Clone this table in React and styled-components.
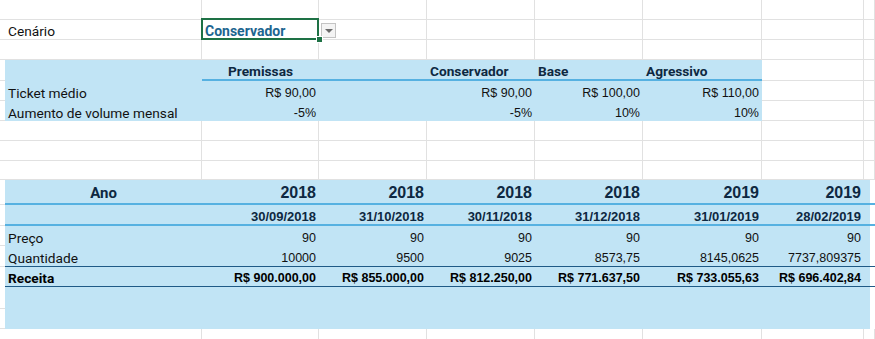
import React from "react";
import styled, { createGlobalStyle, css } from "styled-components";

const GlobalStyle = createGlobalStyle`
  body {
    margin: 0;
    background: #ffffff;
    overflow: hidden;
  }
`;

const COLS = "5px 197px 117px 108px 108px 108px 119px 102px 11px";
const GRID = "#e1e1e1";
const FILL = "#c1e4f5";
const ACCENT = "#56b1e1";
const DARK = "#1f5a86";
const NAVY = "#0e2841";

const fonts = {
  label: css`
    font-family: Roboto, "Liberation Sans", sans-serif;
    font-size: 13.7px;
    color: #111111;
  `,
  labelBold: css`
    font-family: Roboto, "Liberation Sans", sans-serif;
    font-size: 13.7px;
    font-weight: 700;
    color: #000000;
  `,
  head: css`
    font-family: Roboto, "Liberation Sans", sans-serif;
    font-size: 13.7px;
    font-weight: 700;
    color: ${NAVY};
  `,
  ano: css`
    font-family: Roboto, "Liberation Sans", sans-serif;
    font-size: 15px;
    font-weight: 700;
    color: ${NAVY};
  `,
  num: css`
    font-family: "Liberation Sans", Arial, sans-serif;
    font-size: 12.5px;
    color: #111111;
  `,
  year: css`
    font-family: "Liberation Sans", Arial, sans-serif;
    font-size: 16px;
    font-weight: 700;
    color: ${NAVY};
  `,
  date: css`
    font-family: "Liberation Sans", Arial, sans-serif;
    font-size: 13px;
    font-weight: 700;
    color: ${NAVY};
  `,
  total: css`
    font-family: "Liberation Sans", Arial, sans-serif;
    font-size: 12.5px;
    font-weight: 700;
    color: #000000;
  `,
  select: css`
    font-family: Roboto, "Liberation Sans", sans-serif;
    font-size: 14px;
    font-weight: 700;
    color: #1d6590;
  `,
};

const lines = {
  accent: `2px solid ${ACCENT}`,
  dark: `1px solid ${DARK}`,
  double: `4px double ${DARK}`,
};

const Sheet = styled.div`
  display: flex;
  flex-direction: column;
  width: 875px;
  height: 339px;
  overflow: hidden;
`;

const Row = styled.div`
  display: grid;
  grid-template-columns: ${COLS};
  height: ${({ $h }) => $h}px;
  flex-shrink: 0;
`;

/* excel sits text near the bottom of the cell */
const Cell = styled.div`
  position: relative;
  box-sizing: border-box;
  display: flex;
  align-items: center;
  justify-content: ${({ $align }) =>
    $align === "right" ? "flex-end" : $align === "center" ? "center" : "flex-start"};
  padding: 3px 3px 0;
  white-space: nowrap;
  background: ${({ $fill, $part }) =>
    $part
      ? `linear-gradient(to right, ${FILL} 6px, #ffffff 6px)`
      : $fill
      ? FILL
      : "#ffffff"};
  border-right: ${({ $fill }) => ($fill ? "none" : `1px solid ${GRID}`)};
  border-bottom: ${({ $fill, $line }) =>
    $line ? lines[$line] : $fill ? "none" : `1px solid ${GRID}`};
  ${({ $font }) => fonts[$font || "label"]}
`;

const Selection = styled.div`
  position: absolute;
  z-index: 2;
  top: -2px;
  left: -1px;
  right: -1px;
  bottom: -1px;
  border: 2px solid #1e7145;
  pointer-events: none;
`;

const Handle = styled.div`
  position: absolute;
  z-index: 3;
  left: 114px;
  top: 16px;
  width: 5px;
  height: 5px;
  background: #1e7145;
  border: 1px solid #ffffff;
`;

const DropButton = styled.div`
  position: absolute;
  z-index: 2;
  left: 119px;
  top: 3px;
  width: 15px;
  height: 15px;
  box-sizing: border-box;
  background: #f4f4f4;
  border: 1px solid #c4c4c4;
  display: flex;
  align-items: center;
  justify-content: center;
`;

const Arrow = styled.div`
  width: 0;
  height: 0;
  border-left: 4px solid transparent;
  border-right: 4px solid transparent;
  border-top: 4px solid #6a6a6a;
`;

const blank = (h) => ({ h, cells: [] });

const rows = [
  blank(20),
  {
    h: 20,
    cells: [
      { t: "Cenário" },
      { t: "Conservador", font: "select", select: true },
    ],
  },
  blank(20),
  {
    h: 21,
    cells: [
      { fill: true },
      { t: "Premissas", font: "head", align: "center", fill: true, line: "accent" },
      { fill: true, line: "accent" },
      { t: "Conservador", font: "head", fill: true, line: "accent" },
      { t: "Base", font: "head", fill: true, line: "accent" },
      { t: "Agressivo", font: "head", fill: true, line: "accent" },
    ],
  },
  {
    h: 20,
    cells: [
      { t: "Ticket médio", fill: true },
      { t: "R$ 90,00", font: "num", align: "right", fill: true },
      { fill: true },
      { t: "R$ 90,00", font: "num", align: "right", fill: true },
      { t: "R$ 100,00", font: "num", align: "right", fill: true },
      { t: "R$ 110,00", font: "num", align: "right", fill: true },
    ],
  },
  {
    h: 20,
    cells: [
      { t: "Aumento de volume mensal", fill: true },
      { t: "-5%", font: "num", align: "right", fill: true },
      { fill: true },
      { t: "-5%", font: "num", align: "right", fill: true },
      { t: "10%", font: "num", align: "right", fill: true },
      { t: "10%", font: "num", align: "right", fill: true },
    ],
  },
  blank(20),
  blank(20),
  blank(19),
];

const years = ["2018", "2018", "2018", "2018", "2019", "2019"];
const dates = ["30/09/2018", "31/10/2018", "30/11/2018", "31/12/2018", "31/01/2019", "28/02/2019"];
const precos = ["90", "90", "90", "90", "90", "90"];
const quantidades = ["10000", "9500", "9025", "8573,75", "8145,0625", "7737,809375"];
const receitas = [
  "R$ 900.000,00",
  "R$ 855.000,00",
  "R$ 812.250,00",
  "R$ 771.637,50",
  "R$ 733.055,63",
  "R$ 696.402,84",
];
const empty = ["", "", "", "", "", ""];

const tableRow = (h, first, values, font, line) => ({
  h,
  full: true,
  line,
  cells: [
    first,
    ...values.map((t) => ({ t, font, align: "right", fill: true, line })),
  ],
});

rows.push(
  tableRow(25, { t: "Ano", font: "ano", align: "center", fill: true, line: "accent" }, years, "year", "accent"),
  tableRow(21, { fill: true, line: "accent" }, dates, "date", "accent"),
  tableRow(20, { t: "Preço", fill: true }, precos, "num"),
  tableRow(21, { t: "Quantidade", fill: true, line: "dark" }, quantidades, "num", "dark"),
  tableRow(22, { t: "Receita", font: "labelBold", fill: true, line: "double" }, receitas, "total", "double"),
  tableRow(20, { fill: true }, empty, "num"),
  tableRow(20, { fill: true }, empty, "num"),
  blank(20)
);

function SheetRow({ row }) {
  const cells = [];
  for (let i = 0; i < 7; i++) cells.push(row.cells[i] || {});
  return (
    <Row $h={row.h}>
      <Cell />
      {cells.map((c, i) => (
        <Cell
          key={i}
          $fill={c.fill}
          $line={c.line}
          $align={c.align}
          $font={c.font}
        >
          {c.t}
          {c.select && (
            <>
              <Selection />
              <Handle />
              <DropButton>
                <Arrow />
              </DropButton>
            </>
          )}
        </Cell>
      ))}
      {row.full ? <Cell $fill $part $line={row.line} /> : <Cell />}
    </Row>
  );
}

export default function App() {
  return (
    <>
      <GlobalStyle />
      <Sheet>
        {rows.map((row, i) => (
          <SheetRow key={i} row={row} />
        ))}
      </Sheet>
    </>
  );
}
